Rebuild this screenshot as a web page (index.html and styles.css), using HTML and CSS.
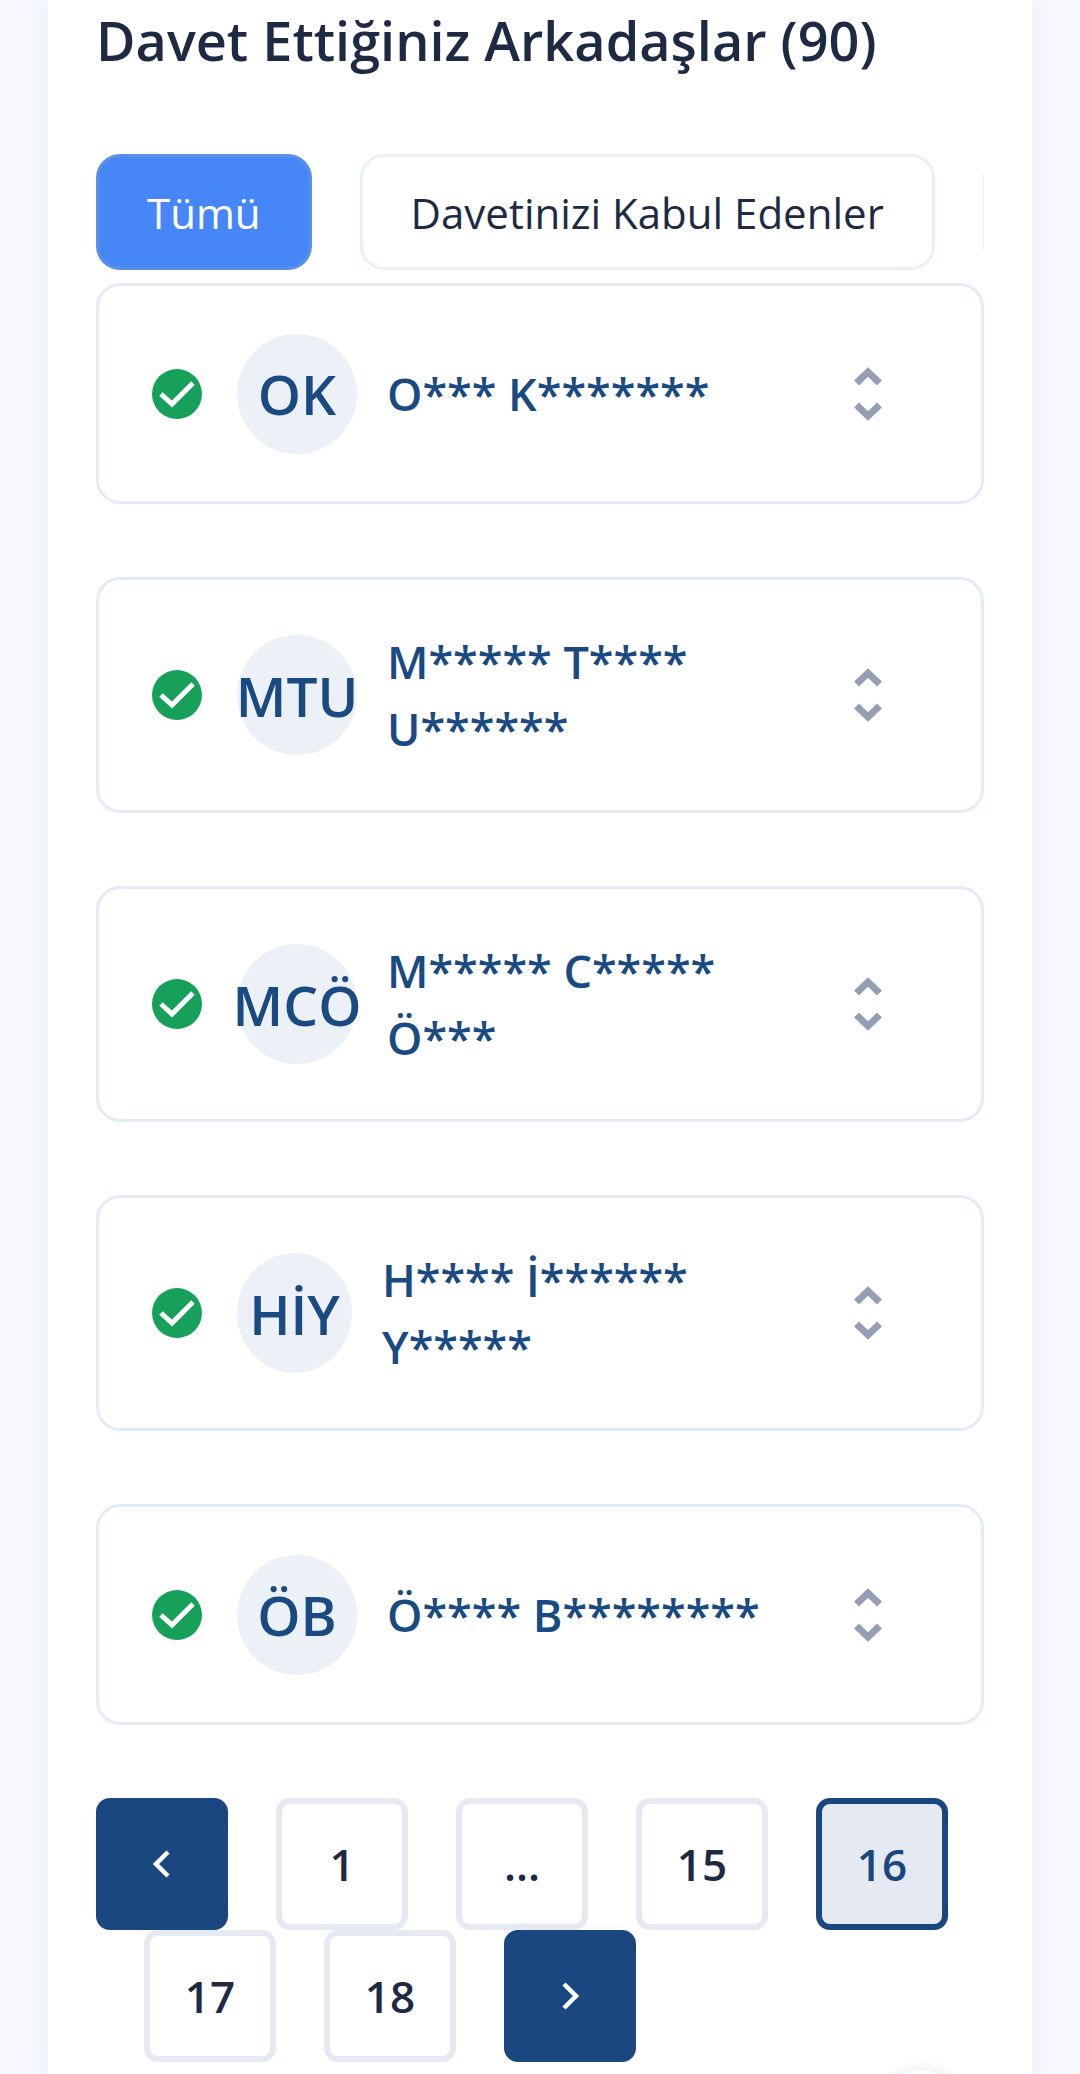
FILE: index.html
```html
<!doctype html>
<html lang="tr">
  <head>
    <meta charset="utf-8">
    <title>Davet Ettiğiniz Arkadaşlar</title>
    <meta name="viewport" content="width=device-width, initial-scale=1">
    <link rel="stylesheet" href="styles.css">
  </head>
  <body>
    <main class="panel">
      <h2 class="title">Davet Ettiğiniz Arkadaşlar (90)</h2>

      <div class="tabs">
        <button class="tab active">Tümü</button>
        <button class="tab">Davetinizi Kabul Edenler</button>
        <button class="tab"></button>
      </div>

      <div class="friend">
        <svg class="check" viewBox="0 0 50 50"><circle cx="25" cy="25" r="25"/><path d="M9 25l11 10L41 14"/></svg>
        <div class="avatar">OK</div>
        <div class="name">O*** K*******</div>
        <svg class="arrows" viewBox="0 0 28 54"><path d="M2.5 16L14 5l11.5 11M2.5 38L14 49l11.5-11"/></svg>
      </div>

      <div class="friend">
        <svg class="check" viewBox="0 0 50 50"><circle cx="25" cy="25" r="25"/><path d="M9 25l11 10L41 14"/></svg>
        <div class="avatar">MTU</div>
        <div class="name">M***** T**** U******</div>
        <svg class="arrows" viewBox="0 0 28 54"><path d="M2.5 16L14 5l11.5 11M2.5 38L14 49l11.5-11"/></svg>
      </div>

      <div class="friend">
        <svg class="check" viewBox="0 0 50 50"><circle cx="25" cy="25" r="25"/><path d="M9 25l11 10L41 14"/></svg>
        <div class="avatar">MCÖ</div>
        <div class="name">M***** C***** Ö***</div>
        <svg class="arrows" viewBox="0 0 28 54"><path d="M2.5 16L14 5l11.5 11M2.5 38L14 49l11.5-11"/></svg>
      </div>

      <div class="friend">
        <svg class="check" viewBox="0 0 50 50"><circle cx="25" cy="25" r="25"/><path d="M9 25l11 10L41 14"/></svg>
        <div class="avatar narrow">HİY</div>
        <div class="name">H**** İ****** Y*****</div>
        <svg class="arrows" viewBox="0 0 28 54"><path d="M2.5 16L14 5l11.5 11M2.5 38L14 49l11.5-11"/></svg>
      </div>

      <div class="friend">
        <svg class="check" viewBox="0 0 50 50"><circle cx="25" cy="25" r="25"/><path d="M9 25l11 10L41 14"/></svg>
        <div class="avatar">ÖB</div>
        <div class="name">Ö**** B********</div>
        <svg class="arrows" viewBox="0 0 28 54"><path d="M2.5 16L14 5l11.5 11M2.5 38L14 49l11.5-11"/></svg>
      </div>

      <ul class="pager">
        <li class="page nav"><svg viewBox="0 0 24 32"><path d="M18 4L6 16l12 12"/></svg></li>
        <li class="page">1</li>
        <li class="page">...</li>
        <li class="page">15</li>
        <li class="page current">16</li>
        <li class="page">17</li>
        <li class="page">18</li>
        <li class="page nav"><svg viewBox="0 0 24 32"><path d="M6 4l12 12L6 28"/></svg></li>
      </ul>
    </main>
    <div class="floating"></div>
  </body>
</html>
```

FILE: styles.css
```css
html, body {
  margin: 0;
  padding: 0;
  height: 2074px;
  overflow: hidden;
}
body {
  position: relative;
  background-color: #f6f8fd;
  font-family: "Open Sans", sans-serif;
  color: #1e2a44;
}
.panel {
  box-sizing: border-box;
  width: 984px;
  height: 2074px;
  margin: 0 48px;
  padding: 0 48px;
  background-color: #fff;
  box-shadow: 0 0 16px #e8edf6;
}
.title {
  margin: 0;
  padding-top: 8px;
  font-size: 54px;
  line-height: 64px;
  font-weight: 600;
}
.tabs {
  display: flex;
  gap: 48px;
  margin-top: 82px;
  width: 888px;
  overflow: hidden;
}
.tab {
  flex: none;
  box-sizing: border-box;
  height: 116px;
  min-width: 120px;
  padding: 0 48px;
  background-color: #fff;
  border: 3px solid #e8f0f9;
  border-radius: 24px;
  font-family: inherit;
  font-size: 42px;
  color: inherit;
}
.tab.active {
  background-color: #4786f6;
  border-color: #5a90ea;
  color: #fff;
}
.friend {
  display: flex;
  align-items: center;
  box-sizing: border-box;
  margin-top: 73px;
  padding: 47.5px 48px 47.5px 53px;
  border: 3px solid #e2ecf8;
  border-radius: 24px;
}
.tabs + .friend {
  margin-top: 13px;
}
.check {
  flex: none;
  width: 50px;
  height: 50px;
  margin-right: 35px;
}
.check circle {
  fill: #16a05a;
}
.check path {
  fill: none;
  stroke: #fff;
  stroke-width: 5;
}
.avatar {
  flex: 0 0 120px;
  display: flex;
  align-items: center;
  justify-content: center;
  min-width: 0;
  height: 120px;
  margin-right: 30px;
  border-radius: 50%;
  background-color: #ecf0f7;
  color: #1a4a82;
  font-size: 55px;
  font-weight: 560;
  white-space: nowrap;
}
.avatar.narrow {
  flex-basis: 115px;
}
.name {
  flex: 1;
  max-width: 400px;
  color: #1a4a82;
  font-size: 45px;
  line-height: 67.5px;
  font-weight: 560;
}
.arrows {
  flex: none;
  width: 28px;
  height: 54px;
  margin-left: auto;
  margin-right: 51px;
  fill: none;
  stroke: #949eb4;
  stroke-width: 7;
}
.pager {
  display: flex;
  flex-wrap: wrap;
  list-style: none;
  margin: 73px 0 0;
  padding: 0;
}
.page {
  display: flex;
  align-items: center;
  justify-content: center;
  box-sizing: border-box;
  width: 132px;
  height: 132px;
  margin-left: 48px;
  border: 6px solid #e4e9f2;
  border-radius: 14px;
  font-size: 44px;
  font-weight: 560;
}
.page:first-child {
  margin-left: 0;
}
.page.nav {
  background-color: #1a4780;
  border-color: #1a4780;
}
.page svg {
  width: 24px;
  height: 32px;
  fill: none;
  stroke: #fff;
  stroke-width: 4.5;
}
.page.current {
  background-color: #e4e9f2;
  border-color: #1a4780;
  color: #1a4780;
}
.floating {
  position: absolute;
  left: 876px;
  top: 2070px;
  width: 90px;
  height: 90px;
  border-radius: 50%;
  background-color: #fff;
  box-shadow: 0 0 14px #dfe3ea;
}
```
